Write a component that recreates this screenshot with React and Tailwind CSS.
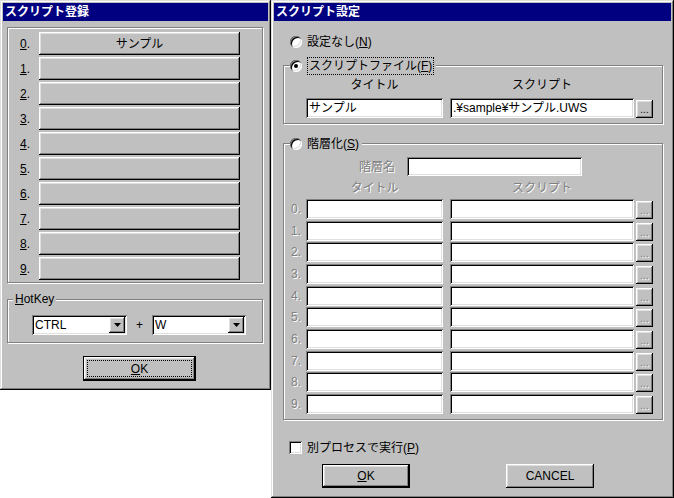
import React from "react";

const frame =
  "bg-[#c0c0c0] shadow-[inset_-1px_-1px_0_#000,inset_1px_1px_0_#dfdfdf,inset_-2px_-2px_0_#808080,inset_2px_2px_0_#fff]";
const raised =
  "bg-[#c0c0c0] shadow-[inset_-1px_-1px_0_#000,inset_1px_1px_0_#fff,inset_-2px_-2px_0_#808080,inset_2px_2px_0_#dfdfdf]";
const sunken =
  "bg-white shadow-[inset_1px_1px_0_#808080,inset_-1px_-1px_0_#fff,inset_2px_2px_0_#000,inset_-2px_-2px_0_#dfdfdf]";
const etched =
  "border border-[#808080] shadow-[inset_1px_1px_0_#fff,1px_1px_0_#fff]";
const disabled = "text-[#808080] [text-shadow:1px_1px_0_#fff]";

function TitleBar({ children }) {
  return (
    <div className="h-[18px] bg-[#000080] text-white font-bold text-[12px] leading-none pl-[2px] flex items-center">
      {children}
    </div>
  );
}

function Radio({ checked }) {
  return (
    <div className={"w-[12px] h-[12px] rounded-full flex items-center justify-center shrink-0 " + sunken}>
      {checked && <div className="w-[4px] h-[4px] rounded-full bg-black" />}
    </div>
  );
}

function Arrow() {
  return (
    <svg width="7" height="4" viewBox="0 0 7 4">
      <polygon points="0,0 7,0 3.5,4" fill="#000" />
    </svg>
  );
}

function Combo({ value, width }) {
  return (
    <div className={"h-[20px] flex items-center p-[2px] " + sunken} style={{ width }}>
      <div className="flex-1 pl-[1px] text-[12px] leading-none">{value}</div>
      <div className={"w-[16px] h-[16px] flex items-center justify-center " + raised}>
        <Arrow />
      </div>
    </div>
  );
}

function Dots({ dim }) {
  return (
    <div className={"w-[17px] h-[18px] mt-[2px] flex items-end justify-center pb-[3px] text-[10px] leading-none " + raised + (dim ? " " + disabled : "")}>
      ...
    </div>
  );
}

function Field({ w, children, h = 20 }) {
  return (
    <div className={"flex items-center pl-[3px] text-[12px] leading-none whitespace-nowrap overflow-hidden " + sunken} style={{ width: w, height: h }}>
      {children}
    </div>
  );
}

function LeftWindow() {
  const rows = Array.from({ length: 10 }, (_, i) => i);
  return (
    <div className={"w-[271px] h-[390px] p-[3px] flex flex-col shrink-0 " + frame}>
      <TitleBar>スクリプト登録</TitleBar>
      <div className={"ml-[4px] mt-[6px] w-[256px] h-[256px] pt-[4px] flex flex-col gap-[2px] " + etched}>
        {rows.map((i) => (
          <div key={i} className="h-[23px] flex items-center">
            <div className="w-[31px] pl-[12px] text-[12px] leading-none">
              <span className="underline">{i}</span>.
            </div>
            <div className={"w-[201px] h-[23px] flex items-center justify-center text-[12px] leading-none " + raised}>
              {i === 0 ? "サンプル" : ""}
            </div>
          </div>
        ))}
      </div>
      <div className={"relative ml-[4px] mt-[16px] w-[256px] h-[44px] pt-[15px] pl-[24px] flex items-start " + etched}>
        <div className="absolute left-[5px] top-[-8px] px-[2px] bg-[#c0c0c0] text-[12px] leading-[14px]">
          <span className="underline">H</span>otKey
        </div>
        <Combo value="CTRL" width={95} />
        <div className="w-[25px] h-[20px] flex items-center justify-center text-[12px] leading-none">+</div>
        <Combo value="W" width={94} />
      </div>
      <div className="ml-[80px] mt-[13px] w-[113px] h-[25px] border border-black">
        <div className={"w-full h-full p-[3px] " + raised}>
          <div className="w-full h-full border border-dotted border-black flex items-center justify-center text-[12px] leading-none">
            <span className="underline">O</span>K
          </div>
        </div>
      </div>
    </div>
  );
}

function RightWindow() {
  const rows = Array.from({ length: 10 }, (_, i) => i);
  return (
    <div className={"w-[403px] h-[498px] p-[3px] flex flex-col shrink-0 " + frame}>
      <TitleBar>スクリプト設定</TitleBar>
      <div className="ml-[16px] mt-[13px] h-[16px] flex items-center gap-[5px] text-[12px] leading-none">
        <Radio />
        <span>
          設定なし(<span className="underline">N</span>)
        </span>
      </div>

      <div className={"relative ml-[9px] mt-[15px] w-[380px] h-[59px] pt-[12px] pl-[22px] flex flex-col " + etched}>
        <div className="absolute left-[6px] top-[-9px] pr-[2px] h-[18px] bg-[#c0c0c0] flex items-center gap-[5px] text-[12px] leading-none">
          <Radio checked />
          <span className="border border-dotted border-black px-[1px] py-[2px]">
            スクリプトファイル(<span className="underline">F</span>)
          </span>
        </div>
        <div className="flex h-[14px] items-center text-[12px] leading-none">
          <div className="w-[137px] text-center">タイトル</div>
          <div className="ml-[7px] w-[184px] text-center">スクリプト</div>
        </div>
        <div className="mt-[6px] flex">
          <Field w={137}>サンプル</Field>
          <div className="ml-[7px]">
            <Field w={184}>.¥sample¥サンプル.UWS</Field>
          </div>
          <div className="ml-[2px]">
            <Dots />
          </div>
        </div>
      </div>

      <div className={"relative ml-[9px] mt-[19px] w-[380px] h-[277px] pt-[13px] flex flex-col " + etched}>
        <div className="absolute left-[6px] top-[-8px] pr-[3px] h-[16px] bg-[#c0c0c0] flex items-center gap-[5px] text-[12px] leading-none">
          <Radio />
          <span>
            階層化(<span className="underline">S</span>)
          </span>
        </div>
        <div className="flex items-center pl-[22px]">
          <div className={"w-[89px] text-right text-[12px] leading-none " + disabled}>階層名</div>
          <div className="ml-[12px]">
            <Field w={175} h={19} />
          </div>
        </div>
        <div className={"mt-[5px] pl-[22px] flex h-[14px] items-center text-[12px] leading-none " + disabled}>
          <div className="w-[137px] text-center">タイトル</div>
          <div className="ml-[7px] w-[184px] text-center">スクリプト</div>
        </div>
        <div className="mt-[4px] flex flex-col">
          {rows.map((i) => (
            <div key={i} className="h-[21.67px] flex items-start">
              <div className={"ml-[7px] w-[15px] h-[20px] flex items-center text-[12px] leading-none " + disabled}>
                {i}.
              </div>
              <Field w={137} />
              <div className="ml-[7px]">
                <Field w={184} />
              </div>
              <div className="ml-[2px]">
                <Dots dim />
              </div>
            </div>
          ))}
        </div>
      </div>

      <div className="ml-[15px] mt-[21px] h-[13px] flex items-center gap-[5px] text-[12px] leading-none">
        <div className={"w-[13px] h-[13px] shrink-0 " + sunken} />
        <span>
          別プロセスで実行(<span className="underline">P</span>)
        </span>
      </div>

      <div className="mt-[10px] flex">
        <div className="ml-[48px] w-[88px] h-[24px] border border-black">
          <div className={"w-full h-full flex items-center justify-center text-[12px] leading-none " + raised}>
            <span className="underline">O</span>K
          </div>
        </div>
        <div className={"ml-[96px] w-[88px] h-[24px] flex items-center justify-center text-[12px] leading-none " + raised}>
          CANCEL
        </div>
      </div>
    </div>
  );
}

export default function App() {
  return (
    <div className="w-[674px] h-[498px] bg-white flex items-start overflow-hidden font-['Liberation_Sans','Noto_Sans_CJK_JP',sans-serif] text-black">
      <LeftWindow />
      <RightWindow />
    </div>
  );
}
